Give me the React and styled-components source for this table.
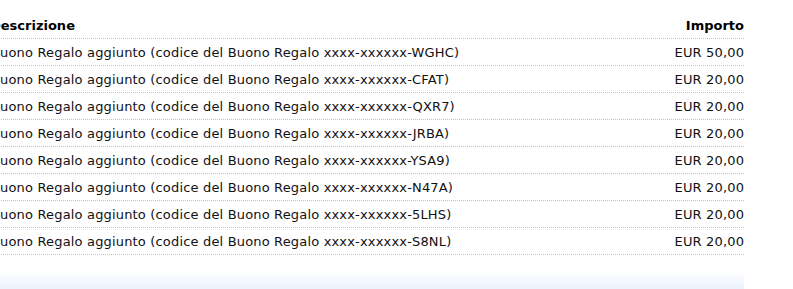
import React from "react";
import styled, { createGlobalStyle } from "styled-components";

const Global = createGlobalStyle`
  html, body { margin: 0; padding: 0; background: #fff; }
  body { font-family: "DejaVu Sans", Verdana, sans-serif; font-size: 13px; color: #111; overflow: hidden; }
`;

const Page = styled.div`
  width: 793px;
  height: 289px;
  padding-top: 12px;
  box-sizing: border-box;
  overflow: hidden;
`;

const Table = styled.div`
  margin-left: -10px;
  width: 754px;
  display: flex;
  flex-direction: column;
`;

const Row = styled.div`
  display: flex;
  justify-content: space-between;
  align-items: center;
  height: 26px;
  border-bottom: 1px dotted #c4c4c4;
  font-weight: ${(p) => (p.$head ? 700 : 400)};
  color: ${(p) => (p.$head ? "#000" : "#111")};
  letter-spacing: ${(p) => (p.$head ? "0" : "0.17px")};
`;

const Cell = styled.span`
  white-space: nowrap;
  padding: 0 ${(p) => (p.$right ? "0" : "1px")};
  margin-left: ${(p) => (p.$head && !p.$right ? "-1px" : "0")};
  margin-right: ${(p) => (p.$right && !p.$head ? "-0.2px" : "0")};
`;

const Footer = styled.div`
  margin-top: 16px;
  margin-left: -10px;
  width: 754px;
  height: 40px;
  background: linear-gradient(to bottom, #ffffff 0px, #eaf2fd 18px, #e6f0fc 40px);
`;

const codes = ["WGHC", "CFAT", "QXR7", "JRBA", "YSA9", "N47A", "5LHS", "S8NL"];
const amounts = ["50,00", "20,00", "20,00", "20,00", "20,00", "20,00", "20,00", "20,00"];

export default function App() {
  return (
    <Page>
      <Global />
      <Table>
        <Row $head>
          <Cell $head>Descrizione</Cell>
          <Cell $right $head>Importo</Cell>
        </Row>
        {codes.map((c, i) => (
          <Row key={c}>
            <Cell>Buono Regalo aggiunto (codice del Buono Regalo xxxx-xxxxxx-{c})</Cell>
            <Cell $right>EUR {amounts[i]}</Cell>
          </Row>
        ))}
      </Table>
      <Footer />
    </Page>
  );
}
